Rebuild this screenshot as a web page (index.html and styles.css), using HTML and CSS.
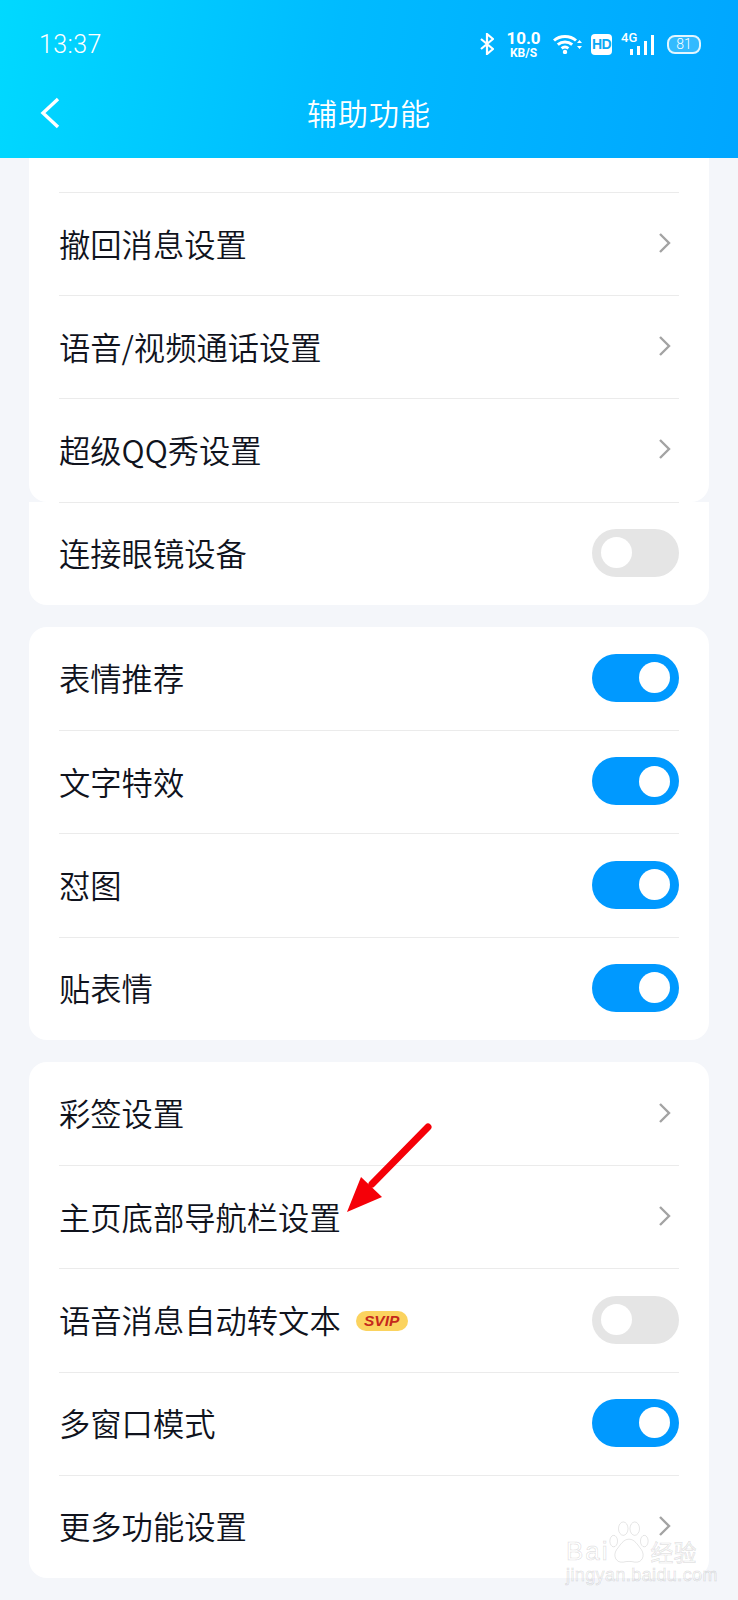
FILE: index.html
```html
<!DOCTYPE html>
<html lang="zh-CN">
<head>
  <meta charset="UTF-8" />
  <meta name="viewport" content="width=device-width, initial-scale=1.0" />
  <title>辅助功能</title>
  <link rel="stylesheet" href="styles.css">
</head>
<body>
  <div class="screen">
    <header class="top">
      <div class="status">
        <span class="time">13:37</span>
        <div class="status-icons">
          <svg class="ic-bt" width="14" height="22" viewBox="0 0 14 22"><path d="M1 6l12 10-6 5V1l6 5L1 16" fill="none" stroke="#fff" stroke-width="2.2"/></svg>
          <div class="speed"><b>10.0</b><small>KB/S</small></div>
          <svg class="ic-wifi" width="29" height="20" viewBox="0 0 29 20">
            <g fill="none" stroke="#fff" stroke-width="3">
              <path d="M1 6.5C7 1.2 17 1.2 23 6.5"/>
              <path d="M4.8 10.6C9 7 15 7 19.2 10.6"/>
              <path d="M8.6 14.4C10.6 12.8 13.4 12.8 15.4 14.4"/>
            </g>
            <circle cx="12" cy="18" r="2.2" fill="#fff"/>
            <path d="M24 9l2.5-3 2.5 3zM24 12l2.5 3 2.5-3z" fill="#fff"/>
          </svg>
          <span class="hd">HD</span>
          <div class="signal">
            <span class="net">4G</span>
            <i class="b1"></i><i class="b2"></i><i class="b3"></i><i class="b4"></i>
          </div>
          <span class="battery">81</span>
        </div>
      </div>
      <div class="nav">
        <svg class="back" width="20" height="32" viewBox="0 0 20 32"><path d="M18 2L3 16l15 14" fill="none" stroke="#fff" stroke-width="3.4"/></svg>
        <h1>辅助功能</h1>
      </div>
    </header>

    <main class="list">
      <section class="card card-first">
        <div class="row row-cut"></div>
        <div class="row"><span>撤回消息设置</span><svg class="chev" width="14" height="22" viewBox="0 0 14 22"><path d="M2 2l9 9-9 9" fill="none" stroke="#a3a3a3" stroke-width="2.4"/></svg></div>
        <div class="row"><span>语音/视频通话设置</span><svg class="chev" width="14" height="22" viewBox="0 0 14 22"><path d="M2 2l9 9-9 9" fill="none" stroke="#a3a3a3" stroke-width="2.4"/></svg></div>
        <div class="row"><span>超级QQ秀设置</span><svg class="chev" width="14" height="22" viewBox="0 0 14 22"><path d="M2 2l9 9-9 9" fill="none" stroke="#a3a3a3" stroke-width="2.4"/></svg></div>
      </section>
      <section class="card card-flat">
        <div class="row"><span>连接眼镜设备</span><i class="toggle"></i></div>
      </section>

      <section class="card">
        <div class="row"><span>表情推荐</span><i class="toggle on"></i></div>
        <div class="row"><span>文字特效</span><i class="toggle on"></i></div>
        <div class="row"><span>怼图</span><i class="toggle on"></i></div>
        <div class="row"><span>贴表情</span><i class="toggle on"></i></div>
      </section>

      <section class="card">
        <div class="row"><span>彩签设置</span><svg class="chev" width="14" height="22" viewBox="0 0 14 22"><path d="M2 2l9 9-9 9" fill="none" stroke="#a3a3a3" stroke-width="2.4"/></svg></div>
        <div class="row"><span>主页底部导航栏设置</span><svg class="chev" width="14" height="22" viewBox="0 0 14 22"><path d="M2 2l9 9-9 9" fill="none" stroke="#a3a3a3" stroke-width="2.4"/></svg></div>
        <div class="row"><span>语音消息自动转文本<em class="svip">SVIP</em></span><i class="toggle"></i></div>
        <div class="row"><span>多窗口模式</span><i class="toggle on"></i></div>
        <div class="row"><span>更多功能设置</span><svg class="chev" width="14" height="22" viewBox="0 0 14 22"><path d="M2 2l9 9-9 9" fill="none" stroke="#a3a3a3" stroke-width="2.4"/></svg></div>
      </section>
    </main>

    <svg class="arrow" width="100" height="100" viewBox="0 0 100 100">
      <path d="M82 5L26 62" stroke="#f50008" stroke-width="7" stroke-linecap="round"/>
      <path d="M1 90L15 55 36 75z" fill="#f50008"/>
    </svg>

    <div class="watermark">
      <div class="wm-top">
        <span class="wm-en">Bai</span>
        <svg class="paw" width="42" height="44" viewBox="0 0 42 46">
          <g fill="#fff" fill-opacity=".6" stroke="#000" stroke-opacity=".11">
            <ellipse cx="5" cy="21" rx="4" ry="6"/>
            <ellipse cx="15" cy="8" rx="5" ry="7"/>
            <ellipse cx="27" cy="8" rx="5" ry="7"/>
            <ellipse cx="37" cy="21" rx="4" ry="6"/>
            <path d="M21 19c6 0 9 6 13 11 4 6 1 14-7 13-4-1-8-1-12 0-8 1-11-7-7-13 4-5 7-11 13-11z"/>
          </g>
          <text x="21" y="39" text-anchor="middle">du</text>
        </svg>
        <span class="wm-cn">经验</span>
      </div>
      <div class="wm-url">jingyan.baidu.com</div>
    </div>
  </div>
</body>
</html>
```

FILE: styles.css
```css
html, body {
  margin: 0;
  padding: 0;
  background: #f4f6fa;
  font-family: "Noto Sans CJK SC", "Noto Sans", sans-serif;
  color: #10131d;
}

.screen {
  position: relative;
  width: 738px;
  height: 1600px;
  overflow: hidden;
}

/* top bar */
.top {
  height: 158px;
  background: linear-gradient(100deg, #00d9ff 0%, #00bbff 45%, #00a6ff 100%);
  color: #fff;
}

.status {
  height: 72px;
  padding: 8px 37px 0 39px;
  display: flex;
  align-items: center;
  justify-content: space-between;
}

.time {
  font-family: Roboto, sans-serif;
  font-weight: 300;
  font-size: 25px;
  letter-spacing: 0.4px;
}

.status-icons {
  display: flex;
  align-items: center;
}

.ic-bt {
  margin-right: 13px;
}

.speed {
  width: 33px;
  margin-right: 13px;
  display: flex;
  flex-direction: column;
  align-items: center;
  font-family: Roboto, sans-serif;
  line-height: 1;
}

.speed b {
  font-size: 17px;
  font-weight: 700;
}

.speed small {
  font-size: 12px;
  font-weight: 700;
  margin-top: 0;
}

.ic-wifi {
  margin-right: 9px;
}

.hd {
  width: 21px;
  height: 21px;
  margin-right: 12px;
  background: #fff;
  border-radius: 4px;
  color: #0aa8f5;
  font-family: "Liberation Sans", sans-serif;
  font-size: 14px;
  font-weight: 700;
  line-height: 21px;
  text-align: center;
  letter-spacing: -0.5px;
}

.signal {
  position: relative;
  width: 30px;
  height: 22px;
  margin-right: 13px;
  display: flex;
  align-items: flex-end;
  gap: 3.5px;
  justify-content: flex-end;
}

.net {
  position: absolute;
  left: -3px;
  top: -2px;
  font-family: Roboto, sans-serif;
  font-size: 13px;
  font-weight: 500;
  line-height: 13px;
}

.signal i {
  width: 3.5px;
  background: #fff;
}

.signal .b1 { height: 6px; }
.signal .b2 { height: 9px; }
.signal .b3 { height: 14px; }
.signal .b4 { height: 20px; }

.battery {
  width: 30px;
  height: 15px;
  border: 2px solid #e2f6ff;
  border-radius: 8px;
  font-family: Roboto, sans-serif;
  font-weight: 300;
  font-size: 14px;
  line-height: 15px;
  text-align: center;
  background: rgba(255, 255, 255, 0.2);
}

.nav {
  position: relative;
  height: 64px;
  display: flex;
  align-items: center;
  justify-content: center;
}

.nav h1 {
  margin: 0;
  font-size: 30px;
  font-weight: 350;
  letter-spacing: 1px;
}

.back {
  position: absolute;
  left: 40px;
  top: 17px;
}

/* cards */
.list {
  display: flex;
  flex-direction: column;
  gap: 22.3px;
  padding: 0 29px;
}

.card {
  background: #fff;
  border-radius: 18px;
}

.card-first {
  border-radius: 0 0 18px 18px;
}

.card-flat {
  margin-top: -22.3px;
  border-radius: 0 0 18px 18px;
}

.row {
  height: 103.2px;
  margin: 0 30px;
  padding-bottom: 2px;
  box-sizing: border-box;
  border-top: 1px solid #ebebeb;
  display: flex;
  align-items: center;
  justify-content: space-between;
  font-size: 31.3px;
  font-weight: 350;
}

.card > .row:first-child {
  border-top: none;
}

.card-flat > .row:first-child {
  border-top: 1px solid #ebebeb;
}

.row-cut {
  height: 34px;
}

.chev {
  margin-right: 7px;
}

.svip {
  display: inline-block;
  width: 52px;
  height: 20px;
  margin-left: 15px;
  vertical-align: 7px;
  background: #fbd35f;
  border-radius: 10px;
  color: #c5281c;
  font-family: "Liberation Sans", sans-serif;
  font-size: 15.5px;
  font-weight: 700;
  font-style: italic;
  line-height: 20px;
  text-align: center;
}

.toggle {
  position: relative;
  width: 87px;
  height: 48px;
  border-radius: 24px;
  background: #e5e5e5;
}

.toggle::after {
  content: "";
  position: absolute;
  top: 8.5px;
  left: 9px;
  width: 31px;
  height: 31px;
  border-radius: 50%;
  background: #fff;
}

.toggle.on {
  background: #0099ff;
}

.toggle.on::after {
  left: 47px;
}

/* annotation over the list */
.arrow {
  position: absolute;
  left: 346px;
  top: 1122px;
}

/* image watermark */
.watermark {
  position: absolute;
  left: 566px;
  top: 1521px;
  width: 136px;
  color: rgba(255, 255, 255, 0.55);
  -webkit-text-stroke: 1px rgba(0, 0, 0, 0.11);
}

.wm-top {
  display: flex;
  align-items: flex-end;
  font-family: "Liberation Sans", sans-serif;
  font-size: 26px;
  line-height: 28px;
  height: 44px;
}

.wm-en {
  letter-spacing: 2px;
}

.paw {
  flex: none;
  margin: 0 1px 0 -2px;
}

.paw text {
  fill: rgba(255, 255, 255, 0.55);
  font-family: "Liberation Sans", sans-serif;
  font-size: 15px;
}

.wm-cn {
  font-family: "Noto Sans CJK SC", sans-serif;
  font-size: 23px;
}

.wm-url {
  font-family: "Liberation Sans", sans-serif;
  font-size: 18px;
  line-height: 20px;
  letter-spacing: 0.4px;
  white-space: nowrap;
}
```
